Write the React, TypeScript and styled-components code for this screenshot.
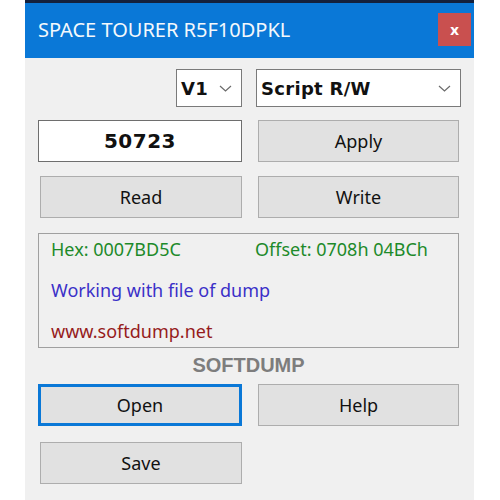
import React, { useState } from "react";
import styled, { createGlobalStyle } from "styled-components";

const GlobalStyle = createGlobalStyle`
  body {
    margin: 0;
    background: #ffffff;
    font-family: "Noto Sans", "Open Sans", sans-serif;
  }
`;

const Chevron = () => (
  <svg width="13" height="7" viewBox="0 0 13 7">
    <path d="M1 1 L6.5 6 L12 1" fill="none" stroke="#6b6b6b" strokeWidth="1.2" />
  </svg>
);

const App = () => {
  const [value, setValue] = useState<string>("50723");

  return (
    <>
      <GlobalStyle />
      <Window>
        <TitleBar>
          <Title>SPACE TOURER R5F10DPKL</Title>
          <CloseButton>x</CloseButton>
        </TitleBar>
        <Body>
          <SelectRow>
            <Select $width={66}>
              <span>V1</span>
              <Chevron />
            </Select>
            <Select $width={205}>
              <span>Script R/W</span>
              <Chevron />
            </Select>
          </SelectRow>

          <ButtonGrid $rowGap={14}>
            <NumberInput value={value} onChange={(e) => setValue(e.target.value)} />
            <Button>Apply</Button>
            <Button>Read</Button>
            <Button>Write</Button>
          </ButtonGrid>

          <InfoBox>
            <InfoLine>
              <InfoText $color="#1d8a2a" $width={204}>Hex: 0007BD5C</InfoText>
              <InfoText $color="#1d8a2a">Offset: 0708h 04BCh</InfoText>
            </InfoLine>
            <InfoLine>
              <InfoText $color="#3b30c8">Working with file of dump</InfoText>
            </InfoLine>
            <InfoLine>
              <InfoText $color="#961c1c">www.softdump.net</InfoText>
            </InfoLine>
          </InfoBox>

          <Brand>SOFTDUMP</Brand>

          <ButtonGrid $rowGap={16}>
            <Button $focused>Open</Button>
            <Button>Help</Button>
            <Button>Save</Button>
          </ButtonGrid>
        </Body>
      </Window>
    </>
  );
};

const Window = styled.div`
  margin-left: 25px;
  width: 449px;
  height: 500px;
  border-top: 3px solid #14213d;
  box-sizing: border-box;
  background: #f0f0f0;
  display: flex;
  flex-direction: column;
`;

const TitleBar = styled.div`
  height: 55px;
  background: #0a78d7;
  display: flex;
  align-items: center;
  justify-content: space-between;
  padding: 0 3px 0 13px;
`;

const Title = styled.div`
  color: #f4f8fc;
  font-size: 20px;
  margin-top: -3px;
`;

const CloseButton = styled.div`
  width: 33px;
  height: 33px;
  background: #c9504f;
  color: #ffffff;
  font-weight: bold;
  font-size: 15px;
  display: flex;
  align-items: center;
  justify-content: center;
  margin-top: -3px;
`;

const Body = styled.div`
  padding: 11px 13px 0 13px;
  display: flex;
  flex-direction: column;
`;

const SelectRow = styled.div`
  display: flex;
  justify-content: flex-end;
  gap: 14px;
`;

const Select = styled.div<{ $width: number }>`
  width: ${(p) => p.$width}px;
  height: 38px;
  box-sizing: border-box;
  background: #ffffff;
  border: 1px solid #7a7a7a;
  display: flex;
  align-items: center;
  justify-content: space-between;
  padding: 0 9px 0 4px;
  font-family: "DejaVu Sans", sans-serif;
  font-weight: bold;
  font-size: 18px;
  letter-spacing: 0.3px;
  color: #111;
`;

const ButtonGrid = styled.div<{ $rowGap: number }>`
  display: grid;
  grid-template-columns: 204px 201px;
  column-gap: 16px;
  row-gap: ${(p) => p.$rowGap}px;
  margin-top: 13px;
`;

const NumberInput = styled.input`
  height: 42px;
  box-sizing: border-box;
  border: 1px solid #6e6e6e;
  background: #ffffff;
  text-align: center;
  font-family: "DejaVu Sans", sans-serif;
  font-weight: bold;
  font-size: 20px;
  letter-spacing: 0.5px;
  color: #111;
  outline: none;
  padding: 0;
`;

const Button = styled.button<{ $focused?: boolean }>`
  height: 42px;
  box-sizing: border-box;
  margin-left: ${(p) => (p.$focused ? 0 : 2)}px;
  background: #e1e1e1;
  border: ${(p) => (p.$focused ? "3px solid #0a78d7" : "1px solid #adadad")};
  font-family: "Noto Sans", sans-serif;
  font-size: 18px;
  color: #111;
  padding: 0;
  &:nth-child(even) {
    margin-left: 0;
  }
`;

const InfoBox = styled.div`
  margin-top: 15px;
  width: 421px;
  height: 115px;
  box-sizing: border-box;
  border: 1px solid #a0a0a0;
  padding: 0 0 0 12px;
  display: flex;
  flex-direction: column;
  overflow: hidden;
`;

const InfoLine = styled.div`
  flex: none;
  height: 41px;
  line-height: 30px;
  display: flex;
`;

const InfoText = styled.span<{ $color: string; $width?: number }>`
  color: ${(p) => p.$color};
  width: ${(p) => (p.$width ? `${p.$width}px` : "auto")};
  font-size: 18px;
`;

const Brand = styled.div`
  width: 421px;
  text-align: center;
  font-family: "Liberation Sans", Arial, sans-serif;
  font-weight: bold;
  font-size: 20px;
  color: #7d7d7d;
  margin-top: 6px;
  margin-bottom: -6px;
`;

export default App;
